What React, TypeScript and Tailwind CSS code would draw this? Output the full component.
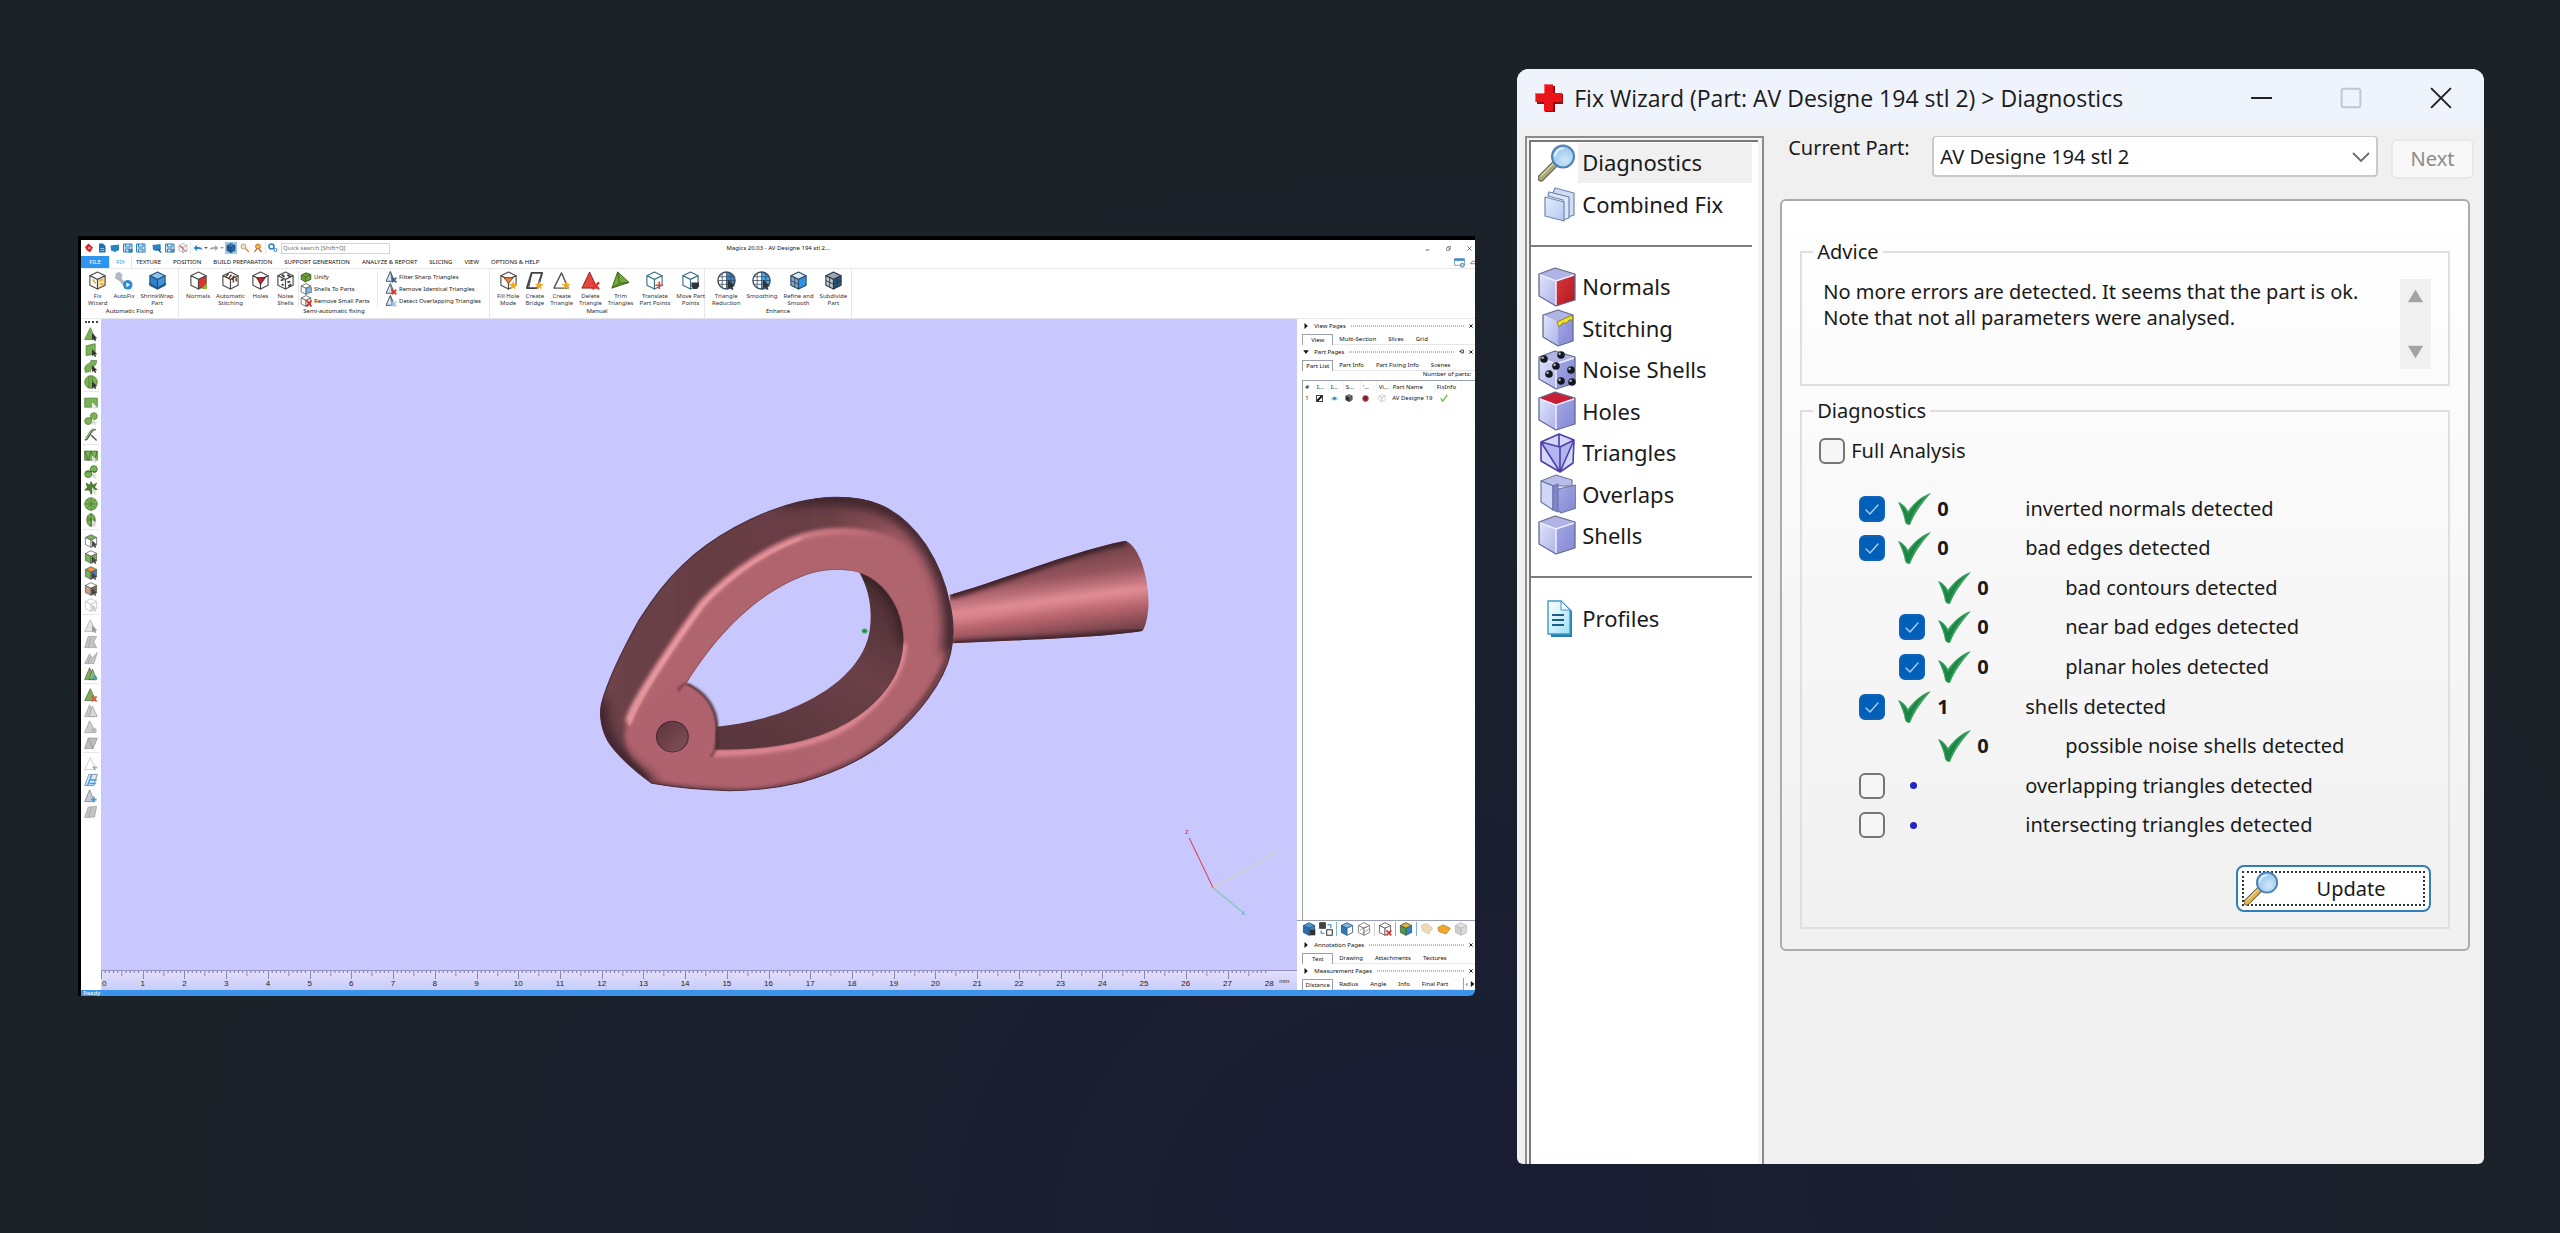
import type { ReactNode } from 'react'

const UI = 'font-["Noto_Sans",sans-serif]'

/* ---------- small drawings ---------- */

type CubeProps = {
  top?: string
  left?: string
  right?: string
  stroke?: string
  size?: string
  children?: ReactNode
}

function Cube({ top = '#fff', left = '#fff', right = '#fff', stroke = '#4b4b4b', size = 'size-[19px]', children }: CubeProps) {
  return (
    <svg viewBox="0 0 20 20" className={size} aria-hidden="true">
      <g stroke={stroke} strokeWidth="1.2" strokeLinejoin="round">
        <path d="M10 1 18 5 10 9 2 5Z" fill={top} />
        <path d="M2 5 10 9V19L2 15Z" fill={left} />
        <path d="M18 5 10 9V19L18 15Z" fill={right} />
      </g>
      {children}
    </svg>
  )
}

function Glyph({ size = 'size-[19px]', children }: { size?: string; children: ReactNode }) {
  return (
    <svg viewBox="0 0 20 20" className={size} fill="none" strokeLinejoin="round" aria-hidden="true">
      {children}
    </svg>
  )
}

const Spark = () => <path d="M15 10 16.2 13.4 19.6 14 16.8 16 17.4 19.6 15 17.6 12.2 19.4 13 16 10.4 14 13.8 13.4Z" fill="#f0a81e" />
const Cursor = ({ fill = '#333' }: { fill?: string }) => <path d="M11.5 9V19L14 16.8 15.6 20 17.4 19.2 16 16.2 19 16Z" fill={fill} />
const Cross = () => <path d="M12 12 19 19M19 12 12 19" stroke="#e2372f" strokeWidth="2.6" />

function SideCube({ top = '#b1b3e4', left = 'url(#cubeLeft)', right = 'url(#cubeRight)', children }: CubeProps) {
  return (
    <svg viewBox="0 0 38 40" className="h-10 w-[38px]" aria-hidden="true">
      <path d="M1 7 17 1 37 7 18 14Z" fill={top} />
      <path d="M1 7 18 14V39L1 29Z" fill={left} />
      <path d="M37 7 18 14V39L37 33Z" fill={right} />
      <path d="M2 8 18 14 36 8M18 14V38" fill="none" stroke="#eceeff" strokeWidth="1.5" />
      <path d="M1 7 17 1 37 7V33L18 39 1 29Z" fill="none" stroke="#626c90" strokeWidth="1.3" strokeLinejoin="round" />
      {children}
    </svg>
  )
}

function Magnifier({ handle, className }: { handle: string; className: string }) {
  return (
    <svg viewBox="0 0 38 38" className={className} aria-hidden="true">
      <path d="M17 20 3 34" stroke="#5d5a45" strokeWidth="7" strokeLinecap="round" />
      <path d="M17 20 3 34" stroke={handle} strokeWidth="5" strokeLinecap="round" />
      <path d="M15 20 3 32" stroke="#f5ebb8" strokeWidth="1.2" strokeLinecap="round" opacity=".7" />
      <circle cx="25" cy="12.5" r="11" fill="url(#lens)" stroke="#4d7fb5" strokeWidth="2" />
      <path d="M17 12a8 8 0 0 1 8-7.5" fill="none" stroke="#fff" strokeWidth="1.6" strokeLinecap="round" opacity=".8" />
    </svg>
  )
}

function CombinedIcon() {
  return (
    <svg viewBox="0 0 38 40" className="h-10 w-[38px]" aria-hidden="true">
      <g stroke="#6f86ad" strokeWidth="1.2" strokeLinejoin="round">
        <path d="M17 4 36 9V31L30 33V13L15 9Z" fill="#cfdcf4" />
        <path d="M11 8 31 13V34L25 36V16L10 12Z" fill="#dce6f8" />
        <path d="M7 13 26 18V37L7 32Z" fill="url(#sheet)" />
      </g>
    </svg>
  )
}

function ProfilesIcon() {
  return (
    <svg viewBox="0 0 38 40" className="h-10 w-[38px]" aria-hidden="true">
      <path d="M11 4H24L34 13V39H13Z" fill="#2b7fae" />
      <path d="M10 3H23L32 12V36H10Z" fill="url(#page)" stroke="#3c9ac6" strokeWidth="1.4" />
      <path d="M23 3V12H32Z" fill="#fff" stroke="#3c9ac6" strokeWidth="1" />
      <path d="M14 17H26M14 22H26M14 27H26" stroke="#1c5f86" strokeWidth="1.8" />
    </svg>
  )
}

function GreenCheck() {
  return (
    <svg viewBox="0 0 34 32" className="h-8 w-[34px]" aria-hidden="true">
      <path d="M0 9C4 10 8 14 10 18 15 11 23 3 33 0 26 8 17 19 12 32 9 32 8 31 7 29 6 22 3 15 0 9Z" fill="#3c9f60" />
      <path d="M2 11C6 14 8 17 10 21 15 13 21 7 28 3 21 10 15 19 11 31 9 31 8 30 8 28 7 21 5 16 2 11Z" fill="#1b8743" />
    </svg>
  )
}

function SharedDefs() {
  return (
    <svg className="absolute size-0" aria-hidden="true">
      <defs>
        <linearGradient id="cubeLeft" x1="0" y1="0" x2="1" y2="1">
          <stop offset="0" stopColor="#dfe6fa" />
          <stop offset="1" stopColor="#aeb2ea" />
        </linearGradient>
        <linearGradient id="cubeRight" x1="0" y1="0" x2="1" y2="1">
          <stop offset="0" stopColor="#a3a8e6" />
          <stop offset="1" stopColor="#8388d2" />
        </linearGradient>
        <linearGradient id="cubeRed" x1="0" y1="0" x2="1" y2="1">
          <stop offset="0" stopColor="#d63a3f" />
          <stop offset="1" stopColor="#b5161c" />
        </linearGradient>
        <linearGradient id="sheet" x1="0" y1="0" x2="1" y2="1">
          <stop offset="0" stopColor="#e3ecfb" />
          <stop offset="1" stopColor="#b4caf0" />
        </linearGradient>
        <linearGradient id="page" x1="0" y1="0" x2="1" y2="1">
          <stop offset="0" stopColor="#fff" />
          <stop offset="1" stopColor="#9fe0f6" />
        </linearGradient>
        <radialGradient id="lens" cx=".6" cy=".65" r=".7">
          <stop offset="0" stopColor="#cfe6fa" />
          <stop offset="1" stopColor="#8fc1ea" />
        </radialGradient>
      </defs>
    </svg>
  )
}

/* ---------- Magics window ---------- */

function QuickBar() {
  const disk = (x: string) => (
    <Glyph size="size-[10px]">
      <path d="M1 2H18V18H1Z" fill="#d8e9f6" stroke="#2d7fbd" strokeWidth="2" />
      <path d="M5 2V8H14V2M5 18V12H14V18" stroke="#2d7fbd" strokeWidth="2" />
      <path d="M11 12H19V19H11Z" fill={x} />
    </Glyph>
  )
  return (
    <div className="grid h-4 grid-cols-3 items-center bg-white">
      <div className="flex items-center gap-[3px] pl-[3px]">
        <Glyph size="size-[10px]"><path d="M9 1 18 9 12 19 5 14 2 8Z" fill="#d8262c" /><path d="M8 10H13" stroke="#fff" strokeWidth="2" /></Glyph>
        <Glyph size="size-[10px]"><path d="M4 1H12L17 6V19H4Z" fill="#1f6fb2" /><path d="M7 11H14M7 15H14" stroke="#bcd9f0" strokeWidth="1.5" /></Glyph>
        <Glyph size="size-[10px]"><path d="M1 5 8 4 18 3V14L10 18 2 15Z" fill="#2c84c4" /></Glyph>
        {disk('#2d7fbd')}
        {disk('#7fa9c8')}
        <span className="-mr-px w-px" />
        <Glyph size="size-[10px]"><path d="M1 4 17 2 18 13 9 16 2 14Z" fill="#2c84c4" /><path d="M12 12 18 19" stroke="#1c5c8c" strokeWidth="3" /></Glyph>
        {disk('#5d8fb5')}
        <Cube size="size-[10px]" stroke="#8a8a8a"><path d="M3 6 17 17" stroke="#e04038" strokeWidth="2" /></Cube>
        <span className="-mx-px h-3 w-px bg-gray-200" />
        <Glyph size="size-[10px]"><path d="M1 10 8 4V8C14 7 18 9 19 14 16 12 13 12 8 12V16Z" fill="#2a86cc" /></Glyph>
        <Glyph size="-mx-0.5 size-[4px]"><path d="M1 5H19L10 15Z" fill="#555" /></Glyph>
        <Glyph size="size-[10px]"><path d="M19 10 12 4V8C6 7 2 9 1 14 4 12 7 12 12 12V16Z" fill="#a9a9a9" /></Glyph>
        <Glyph size="-mx-0.5 size-[4px]"><path d="M1 5H19L10 15Z" fill="#999" /></Glyph>
        <span className="flex h-3 w-3 items-center justify-center bg-[#9cc7ec]">
          <Cube size="size-[10px]" top="#3a7fb8" left="#1f5c92" right="#2a6ca6" stroke="#173f66" />
        </span>
        <Glyph size="size-[10px]"><circle cx="7" cy="7" r="5" fill="#f8dfae" stroke="#888" strokeWidth="1.5" /><path d="M11 11 18 18" stroke="#e0932b" strokeWidth="3" /></Glyph>
        <Glyph size="size-[10px]"><circle cx="10" cy="7" r="5" fill="#f6b24d" stroke="#b5641c" strokeWidth="1.5" /><path d="M3 18 8 11M12 12 17 18" stroke="#d45a2a" strokeWidth="2.5" /></Glyph>
        <span className="-mx-px h-3 w-px bg-gray-200" />
        <Glyph size="size-[10px]"><circle cx="7" cy="7" r="5" stroke="#2a7fc0" strokeWidth="3" /><circle cx="15" cy="14" r="3" stroke="#2a7fc0" strokeWidth="2" /></Glyph>
        <input
          aria-label="Quick search"
          placeholder="Quick search [Shift+Q]"
          className="h-[11px] w-[109px] border border-gray-300 bg-white px-px text-[6px] text-gray-700 placeholder:text-gray-500"
        />
      </div>
      <h2 className="text-center text-[6px] leading-3 text-[#111]">Magics 20.03 - AV Designe 194 stl 2...</h2>
      <div className="flex items-center justify-end gap-4 pr-[3px]">
        <button aria-label="Minimize"><Glyph size="size-[5px]"><path d="M3 16H17" stroke="#333" strokeWidth="3" /></Glyph></button>
        <button aria-label="Restore"><Glyph size="size-[5px]"><path d="M2 7H13V18H2ZM7 7V2H18V13H13" stroke="#333" strokeWidth="2" /></Glyph></button>
        <button aria-label="Close"><Glyph size="size-[5px]"><path d="M2 2 18 18M18 2 2 18" stroke="#333" strokeWidth="2.5" /></Glyph></button>
      </div>
    </div>
  )
}

function RibbonTabs() {
  const tabs = ['TEXTURE', 'POSITION', 'BUILD PREPARATION', 'SUPPORT GENERATION', 'ANALYZE & REPORT', 'SLICING', 'VIEW', 'OPTIONS & HELP']
  return (
    <div className="flex h-[13px] items-stretch border-b border-gray-200 bg-white text-[6px] leading-3 text-[#111]">
      <button className="w-7 bg-[#2f94ee] text-white">FILE</button>
      <button className="w-[23px] border-x border-gray-200 text-[#3d9be9]">FIX</button>
      <div className="flex flex-1 gap-3 pl-1">
        {tabs.map((t) => <button key={t} className="whitespace-nowrap">{t}</button>)}
      </div>
      <div className="flex items-center gap-1">
        <Glyph size="h-[11px] w-[13px]"><path d="M1 3H19V15H1Z" fill="#fff" stroke="#5b97c4" strokeWidth="1.5" /><path d="M1 3H19V7H1Z" fill="#3c8cc8" /><circle cx="15" cy="15" r="3.5" fill="#c9d3de" stroke="#56708a" strokeWidth="1.5" /></Glyph>
        <Glyph size="size-[5px]"><path d="M2 15 9 5H20M2 15H20" stroke="#444" strokeWidth="2.5" /></Glyph>
      </div>
    </div>
  )
}

function RibbonItem({ icon, lines }: { icon: ReactNode; lines: string[] }) {
  return (
    <button className="flex flex-col items-center px-[3px]">
      {icon}
      <span className="mt-[3px] text-center text-[6px] leading-[7px] whitespace-pre text-[#333]">{lines.join('\n')}</span>
    </button>
  )
}

function RibbonRow({ icon, label }: { icon: ReactNode; label: string }) {
  return (
    <button className="flex h-3 items-center gap-0.5 text-[6px] whitespace-nowrap text-[#222]">
      {icon}
      {label}
    </button>
  )
}

function RibbonGroup({ title, className = '', children }: { title: string; className?: string; children: ReactNode }) {
  return (
    <section className={`flex flex-col justify-between border-r border-gray-200 ${className}`}>
      <div className="flex items-start pt-0.5 pl-1">{children}</div>
      <h3 className="pb-0.5 text-center text-[6px] leading-[9px] text-[#222]">{title}</h3>
    </section>
  )
}

function SmallTri({ fill, mark }: { fill: string; mark: string }) {
  return (
    <Glyph size="size-3">
      <path d="M9 1 16 17H2Z" fill={fill} stroke="#43566a" strokeWidth="1.5" />
      <path d="M2 17 9 1 12 17Z" fill="#dfe6ee" stroke="#43566a" strokeWidth="1.2" />
      <path d="M11 11 19 19M19 11 11 19" stroke={mark} strokeWidth="2.5" />
    </Glyph>
  )
}

function MeshDisc({ right }: { right: string }) {
  return (
    <Glyph>
      <circle cx="10" cy="10" r="9" fill="#fff" />
      <path d="M10 1A9 9 0 0 1 10 19Z" fill={right} />
      <circle cx="10" cy="10" r="9" stroke="#3a4b5c" strokeWidth="1.5" />
      <path d="M10 1V19M1 10H19M5.5 3V17M2.5 6H17M2.5 14H17M14.5 3V17" stroke="#3a4b5c" strokeWidth=".8" />
      <Cursor />
    </Glyph>
  )
}

function Ribbon() {
  return (
    <div className="flex h-[49px] items-stretch bg-white">
      <RibbonGroup title="Automatic Fixing" className="w-[98px]">
        <RibbonItem lines={['Fix', 'Wizard']} icon={<Cube right="#f6e1a8"><path d="M12 10 16 9M13 13 17 15M5 9 8 13" stroke="#e0a42c" strokeWidth="1.5" /></Cube>} />
        <RibbonItem
          lines={['AutoFix']}
          icon={
            <Glyph>
              <path d="M2 2 6 1 9 4 8 8 15 15 12 18 5 10 1 8Z" fill="#b4b9bf" />
              <circle cx="14.5" cy="14.5" r="5" fill="#2a8ad2" />
              <path d="M13 12V17L17 14.5Z" fill="#fff" />
            </Glyph>
          }
        />
        <RibbonItem lines={['ShrinkWrap', 'Part']} icon={<Cube top="#8cc4ee" left="#2d82cc" right="#3f93da" stroke="#24557e"><path d="M1 13 10 18 19 13" fill="none" stroke="#24557e" strokeWidth="1.5" /></Cube>} />
      </RibbonGroup>
      <RibbonGroup title="Semi-automatic fixing" className="w-[311px]">
        <RibbonItem lines={['Normals']} icon={<Cube right="#e3322b"><path d="M13 19 19 12V19Z" fill="#8bb83a" /></Cube>} />
        <RibbonItem lines={['Automatic', 'Stitching']} icon={<Cube><path d="M5 6 8 3M8 8 11 4M11 9 14 5M13 12V8M16 11V7" stroke="#5a3a20" strokeWidth="1.5" /></Cube>} />
        <RibbonItem lines={['Holes']} icon={<Cube><path d="M6 7H15L10 14Z" fill="#c3262b" stroke="#5a1a1c" /></Cube>} />
        <RibbonItem lines={['Noise', 'Shells']} icon={<Cube><path d="M6 4 9 6M5 10 8 9M12 12 15 11M6 14 8 15M13 16 16 14M12 4 15 6" stroke="#333" strokeWidth="1.8" /></Cube>} />
        <span className="h-9 w-px bg-gray-200" />
        <div className="flex w-[78px] flex-col pl-px">
          <RibbonRow label="Unify" icon={<Glyph size="size-3"><path d="M2 7 10 3 18 6V14L9 18 2 14Z" fill="#6fa03a" stroke="#36591b" strokeWidth="1.5" /><path d="M2 7 9 10 18 6M9 10V18" stroke="#36591b" /></Glyph>} />
          <RibbonRow label="Shells To Parts" icon={<Cube size="size-3"><path d="M11 8H19V16H11Z" fill="#8dbbe6" stroke="#35658f" /></Cube>} />
          <RibbonRow label="Remove Small Parts" icon={<Cube size="size-3"><path d="M11 9 19 19M19 9 11 19" stroke="#d9322e" strokeWidth="3" /></Cube>} />
        </div>
        <span className="h-9 w-px bg-gray-200" />
        <div className="flex flex-col pl-[7px]">
          <RibbonRow label="Filter Sharp Triangles" icon={<SmallTri fill="#5d84ab" mark="#3a5f86" />} />
          <RibbonRow label="Remove Identical Triangles" icon={<SmallTri fill="#e3a1a0" mark="#d9322e" />} />
          <RibbonRow label="Detect Overlapping Triangles" icon={<SmallTri fill="#4fa3e0" mark="#9fd0f2" />} />
        </div>
      </RibbonGroup>
      <RibbonGroup title="Manual" className="w-[215px]">
        <RibbonItem lines={['Fill Hole', 'Mode']} icon={<Cube><path d="M5 7H15L10 13Z" fill="#e9813b" stroke="#7a3f16" /><Spark /></Cube>} />
        <RibbonItem lines={['Create', 'Bridge']} icon={<Glyph><path d="M7 2H18L13 18H2Z" stroke="#444" strokeWidth="2" /><path d="M7 2 4 18M18 2 15 14" stroke="#444" /><Spark /></Glyph>} />
        <RibbonItem lines={['Create', 'Triangle']} icon={<Glyph><path d="M10 2 17 18H2Z" fill="#fff" stroke="#555" strokeWidth="1.5" /><Spark /></Glyph>} />
        <RibbonItem lines={['Delete', 'Triangle']} icon={<Glyph><path d="M9 1 17 18H1Z" fill="#e2463e" stroke="#8d2420" /><Cross /></Glyph>} />
        <RibbonItem lines={['Trim', 'Triangles']} icon={<Glyph><path d="M7 1 19 12 1 18Z" fill="#74a83a" stroke="#3c6319" /><path d="M7 1 9 13 1 18M9 13 19 12" stroke="#3c6319" /></Glyph>} />
        <RibbonItem lines={['Translate', 'Part Points']} icon={<Cube stroke="#3b6f86"><path d="M15 11V19M11 15H19" stroke="#e2463e" strokeWidth="1.8" /></Cube>} />
        <RibbonItem lines={['Move Part', 'Points']} icon={<Cube stroke="#3b6f86"><path d="M11 12H19V16L17 19H13L11 16Z" fill="#333" /></Cube>} />
      </RibbonGroup>
      <RibbonGroup title="Enhance" className="w-[147px]">
        <RibbonItem lines={['Triangle', 'Reduction']} icon={<MeshDisc right="#2f86cf" />} />
        <RibbonItem lines={['Smoothing']} icon={<MeshDisc right="#49a2e6" />} />
        <RibbonItem lines={['Refine and', 'Smooth']} icon={<Cube top="#dce9f5" left="#8aa9c6" right="#2f94e4" stroke="#2a4a66"><path d="M2 10 10 14M6 7V17" stroke="#2a4a66" /></Cube>} />
        <RibbonItem lines={['Subdivide', 'Part']} icon={<Cube top="#9aa7b3" left="#c4ccd4" right="#27557c" stroke="#2d3a46"><path d="M2 10 10 14 18 10M6 7V17M14 7V17" stroke="#2d3a46" fill="none" /></Cube>} />
      </RibbonGroup>
    </div>
  )
}

const GREEN = '#79b356'
const cubeFaces = [
  [GREEN, '#fff', '#fff'],
  ['#fff', GREEN, GREEN],
  ['#f0913a', GREEN, '#3f7fb5'],
  ['#fff', '#c9a08a', '#8a6a58'],
  ['#fff', '#fff', '#fff'],
]

const tools: ReactNode[][] = [
  [
    <><path d="M9 1 17 18H1Z" fill={GREEN} stroke="#4d7a30" /><Cursor /></>,
    <><path d="M3 4 16 1V16L3 18Z" fill={GREEN} stroke="#4d7a30" /><Cursor /></>,
    <><path d="M1 14C2 5 9 9 10 2H18C18 12 10 10 9 18L2 19Z" fill={GREEN} stroke="#4d7a30" /><Cursor /></>,
    <><circle cx="10" cy="10" r="9" fill={GREEN} stroke="#4d7a30" /><path d="M7 1V19M12 1V19" stroke="#4d7a30" /><Cursor /></>,
  ],
  [
    <><path d="M1 3H19V16H1Z" fill={GREEN} stroke="#4d7a30" /><Cursor fill="#eee" /></>,
    <><circle cx="14" cy="6" r="5" fill={GREEN} stroke="#4d7a30" /><circle cx="6" cy="13" r="5" fill={GREEN} stroke="#4d7a30" /><Cursor fill="#ddd" /></>,
    <><path d="M1 17C9 17 6 4 17 2M10 10 18 18" stroke="#555" strokeWidth="2" /><path d="M2 14C7 14 6 3 14 1" stroke={GREEN} strokeWidth="2" /></>,
  ],
  [
    <><path d="M1 3H19V16H1Z" fill={GREEN} stroke="#38601f" /><path d="M1 3 6 16 10 3 15 16 19 3" stroke="#38601f" /><Cursor fill="#ddd" /></>,
    <><circle cx="14" cy="6" r="5" fill={GREEN} stroke="#38601f" /><circle cx="6" cy="13" r="5" fill={GREEN} stroke="#38601f" /><path d="M3 10 17 9" stroke="#38601f" /><Cursor fill="#ddd" /></>,
    <><path d="M3 3 8 6 10 1 13 6 18 3 15 9 19 12 13 13 10 19 8 13 1 13 5 9Z" fill="#4e8433" stroke="#38601f" /><Cursor fill="#ddd" /></>,
    <><circle cx="10" cy="10" r="9" fill={GREEN} stroke="#4d7a30" /><path d="M10 1V19M1 10H19M4 4 16 16M16 4 4 16" stroke="#4d7a30" /></>,
    <><ellipse cx="10" cy="10" rx="6" ry="9" fill={GREEN} stroke="#38601f" /><path d="M10 1V19M4 10H16M5 5 15 15" stroke="#38601f" /><Cursor fill="#ddd" /></>,
  ],
  cubeFaces.map(([a, b, c], i) => (
    <>
      <g stroke={i === 4 ? '#bbb' : '#555'}>
        <path d="M10 1 18 5 10 9 2 5Z" fill={a} />
        <path d="M2 5 10 9V19L2 15Z" fill={b} />
        <path d="M18 5 10 9V19L18 15Z" fill={c} />
      </g>
      <Cursor fill={i === 4 ? '#ccc' : '#444'} />
    </>
  )),
  [
    <><path d="M9 1 17 18H1Z" fill="#e4e4e4" stroke="#aaa" /><Cursor fill="#999" /></>,
    <><path d="M6 2H18L14 10 18 18H1Z" fill="#c4c4c4" stroke="#999" /><path d="M10 4 6 18" stroke="#999" /></>,
    <><path d="M8 4 12 10 19 2 14 18H1Z" fill="#c4c4c4" stroke="#999" /><path d="M9 8 6 18" stroke="#999" /></>,
    <><path d="M8 1 15 18H1Z" fill={GREEN} stroke="#555" /><path d="M12 3 18 18H7Z" fill="#8dbb6b" stroke="#555" /><path d="M12 15H19M16 12V19" stroke="#3d9be0" strokeWidth="2.5" /></>,
  ],
  [
    <><path d="M9 1 17 18H1Z" fill={GREEN} stroke="#555" /><path d="M11 12 18 19M18 12 11 19" stroke="#e2593a" strokeWidth="2.5" /></>,
    <><path d="M8 1 15 18H1Z" fill="#c9c9c9" stroke="#999" /><path d="M12 3 19 18H7Z" fill="#d6d6d6" stroke="#999" /></>,
    <><path d="M8 1 17 18H1Z" fill="#cfcfcf" stroke="#999" /><circle cx="14" cy="15" r="4" fill="#bbb" /></>,
    <><path d="M6 3H19L13 18H1Z" fill="#bdbdbd" stroke="#8f8f8f" /><path d="M6 3 13 18" stroke="#8f8f8f" /></>,
  ],
  [
    <><path d="M9 1 17 18H1Z" fill="#fff" stroke="#bbb" /><path d="M15 12V19M12 15H19" stroke="#aaa" strokeWidth="2" /></>,
    <><path d="M7 2 1 18H14L19 2Z" fill="#dde8f2" stroke="#55718a" /><path d="M11 3 5 18M9 10H18M8 15H17" stroke="#3d9be0" strokeWidth="2" /></>,
    <><path d="M8 1 15 18H1Z" fill="#c2c9d0" stroke="#777" /><path d="M14 11V19M10 15H18" stroke="#3d9be0" strokeWidth="2.5" /></>,
    <><path d="M6 3 18 2 15 17 1 18Z" fill="#c4c4c4" stroke="#999" /><path d="M10 3 7 18" stroke="#999" /></>,
  ],
]

function SideTools() {
  return (
    <div className="flex w-5 flex-col items-center bg-white pt-0.5">
      <span className="mb-[3px] w-[13px] border-t-2 border-dotted border-[#444]" />
      {tools.map((group, g) => (
        <div key={g} className="flex flex-col border-b border-gray-200 pb-px last:border-0 [&+div]:pt-[3px]">
          {group.map((icon, i) => (
            <button key={i} aria-label={`Tool ${g + 1}.${i + 1}`} className="flex h-4 w-4 items-center justify-center">
              <Glyph size="size-[14px]">{icon}</Glyph>
            </button>
          ))}
        </div>
      ))}
    </div>
  )
}

const OUTER =
  'M105 700C120 635 160 535 200 450 240 375 270 330 310 285 380 205 490 130 600 97 640 86 670 82 700 82 750 82 780 90 810 105 850 125 890 165 925 225 955 280 975 340 985 400 995 450 997 500 987 550 970 640 900 740 840 800 770 870 690 910 610 937 540 957 470 962 430 962 360 960 290 952 232 940 185 900 140 850 122 815 105 780 98 735 105 700Z'
const INNER = 'M320 640C350 580 400 500 460 435 520 370 580 330 640 308 680 297 720 296 755 308 800 325 835 370 852 420 875 490 872 550 850 610 825 670 780 730 700 775 610 825 500 842 395 838L397 770C395 710 360 660 320 640Z'
const OPENING = 'M320 640C350 580 400 500 460 435 520 370 580 330 640 308 680 297 720 296 757 308 782 360 790 420 783 480 775 550 730 620 660 670 580 730 480 762 397 770 395 710 360 660 320 640Z'
const CONE = 'M985 375C1120 330 1290 245 1430 212 1465 230 1488 320 1488 400 1487 440 1480 475 1472 483 1350 505 1150 510 993 520Z'

function Viewport() {
  return (
    <svg viewBox="0 0 1196 651" preserveAspectRatio="none" className="block h-[651px] w-full bg-[#c8c8fe]" role="img" aria-label="Part preview">
      <defs>
        <linearGradient id="cone" gradientUnits="userSpaceOnUse" x1="1200" y1="245" x2="1243" y2="520">
          <stop offset="0" stopColor="#6a3f45" />
          <stop offset=".3" stopColor="#96545d" />
          <stop offset=".54" stopColor="#dc8890" />
          <stop offset=".72" stopColor="#b8656e" />
          <stop offset="1" stopColor="#653a41" />
        </linearGradient>
        <linearGradient id="band" gradientUnits="userSpaceOnUse" x1="100" y1="0" x2="960" y2="0">
          <stop offset="0" stopColor="#6e4349" />
          <stop offset=".3" stopColor="#663d43" />
          <stop offset=".68" stopColor="#6a3f45" />
          <stop offset=".82" stopColor="#7d4850" stopOpacity=".8" />
          <stop offset="1" stopColor="#a05a64" stopOpacity="0" />
        </linearGradient>
        <linearGradient id="wall" gradientUnits="userSpaceOnUse" x1="800" y1="350" x2="500" y2="800">
          <stop offset="0" stopColor="#4f3036" />
          <stop offset=".45" stopColor="#6b4047" />
          <stop offset="1" stopColor="#5a373d" />
        </linearGradient>
        <linearGradient id="shine" gradientUnits="userSpaceOnUse" x1="170" y1="0" x2="850" y2="0">
          <stop offset="0" stopColor="#f0a0a6" />
          <stop offset=".55" stopColor="#e88f98" />
          <stop offset=".85" stopColor="#c5737c" />
          <stop offset="1" stopColor="#b0646e" stopOpacity="0" />
        </linearGradient>
        <linearGradient id="pin" x1="0" y1="0" x2="1" y2="1">
          <stop offset="0" stopColor="#5a353b" />
          <stop offset="1" stopColor="#84505a" />
        </linearGradient>
        <filter id="soft6"><feGaussianBlur stdDeviation="6" /></filter>
        <filter id="soft14" x="-20%" y="-20%" width="140%" height="140%"><feGaussianBlur stdDeviation="14" /></filter>
        <filter id="soft3"><feGaussianBlur stdDeviation="3" /></filter>
        <clipPath id="outerClip"><path d={OUTER} /></clipPath>
        <clipPath id="innerClip"><path d={INNER} /></clipPath>
        <clipPath id="coneClip"><path d={CONE} /></clipPath>
      </defs>

      <g transform="translate(459 151) scale(.3954 .3333)" fill="none">
        <path d={CONE} fill="url(#cone)" />
        <g clipPath="url(#coneClip)">
          <path d="M985 375C1120 330 1290 245 1430 212" stroke="#3c242b" strokeWidth="26" filter="url(#soft6)" />
          <path d="M1472 483C1350 505 1150 510 993 520" stroke="#3c242b" strokeWidth="18" filter="url(#soft6)" />
          <path d="M990 447C1150 420 1300 375 1480 362" stroke="#e8959c" strokeWidth="18" opacity=".6" filter="url(#soft14)" />
        </g>

        <path d={OUTER} fill="#b0646e" />
        <g clipPath="url(#outerClip)">
          <path
            d="M60 720 180 440 300 240 600 60 800 60 1000 250 1000 420C970 320 900 215 800 185 730 168 650 175 590 205 500 245 420 320 360 390 300 470 240 590 170 755L232 960 90 960Z"
            fill="url(#band)"
            filter="url(#soft6)"
          />
          <path d="M172 750C155 800 160 850 200 890 215 910 235 925 260 950L500 980 700 930 600 800 300 600Z" fill="#b0646e" filter="url(#soft6)" />
          <path d="M172 755C185 690 290 520 360 400 440 300 540 225 620 198 690 176 770 180 850 215" stroke="url(#shine)" strokeWidth="15" filter="url(#soft6)" />
          <path d="M174 765C200 680 300 500 365 400 440 305 530 240 610 205" stroke="#f0a0a6" strokeWidth="5" filter="url(#soft3)" />
          <path d="M560 95C830 50 900 165 945 260 985 350 1000 450 985 550" stroke="#3f262d" strokeWidth="44" filter="url(#soft14)" />
          <path d="M985 540C960 660 850 800 760 865 640 940 520 970 420 962 340 960 280 950 232 940" stroke="#5a343c" strokeWidth="12" filter="url(#soft6)" />
          <path d="M105 690C90 790 140 860 232 940" stroke="#3a232a" strokeWidth="34" filter="url(#soft14)" />
        </g>
        <path d={OUTER} stroke="#4a2e3a" strokeWidth="3" />

        <path d={INNER} stroke="#8a4a54" strokeWidth="4" />
        <path d="M869 520C865 620 800 720 700 785 610 835 500 850 385 850" stroke="#e38c95" strokeWidth="16" filter="url(#soft6)" />
        <path d="M320 640C300 648 300 660 300 664M397 780C398 820 394 845 380 860" stroke="#6b3d45" strokeWidth="6" filter="url(#soft3)" />
        <path d={INNER} fill="url(#wall)" />
        <g clipPath="url(#innerClip)">
          <path d="M755 308C835 345 875 430 869 520" stroke="#2f1c22" strokeWidth="24" filter="url(#soft14)" />
        </g>
        <path d={OPENING} fill="#c8c8fe" />
        <path d="M322 642C365 665 397 710 397 772V838" stroke="#4a2b32" strokeWidth="6" filter="url(#soft3)" />
        <ellipse cx="284" cy="800" rx="40" ry="46" fill="url(#pin)" stroke="#4a2b32" strokeWidth="3" />
        <circle cx="770" cy="483" r="7" fill="#1f8f4d" stroke="#7bc79c" strokeWidth="2" />
      </g>

      {/* axis triad */}
      <g fill="none" strokeWidth="1">
        <path d="M1112 569 1088 519" stroke="#d9434a" />
        <path d="M1112 569 1177 532" stroke="#d8d6a8" />
        <path d="M1112 569 1140 592" stroke="#7fc8b0" />
      </g>
      <text x="1084" y="515" fontSize="7" fill="#c2323a" className={UI}>z</text>
      <text x="1140" y="596" fontSize="7" fill="#4fae94" className={UI}>x</text>
    </svg>
  )
}

function Ruler() {
  const units = Array.from({ length: 28 }, (_, i) => i)
  return (
    <div className="flex h-5 border-t border-[#8f8fc0] bg-linear-to-b from-[#e4defa] to-[#c6cdfb] font-['Liberation_Sans',sans-serif] text-[8px] leading-[9px] text-[#222]">
      <div className="grid flex-1 grid-cols-28">
        {units.map((n) => (
          <div key={n} className="flex flex-col justify-between pb-0.5">
            <svg viewBox="0 0 100 8" preserveAspectRatio="none" className="h-2 w-full" aria-hidden="true">
              <path d="M1 0V8" stroke="#77779d" strokeWidth="2" />
              <path d="M50 0V5" stroke="#77779d" strokeWidth="2" />
              <path d="M10 0V2M20 0V2M30 0V2M40 0V2M60 0V2M70 0V2M80 0V2M90 0V2" stroke="#8a8ab0" strokeWidth="3" />
            </svg>
            <span className={n ? 'w-4 -translate-x-1/2 text-center' : 'pl-px'}>{n}</span>
          </div>
        ))}
      </div>
      <div className="flex w-7 items-end justify-between pr-2 pb-0.5">
        <span className="w-4 -translate-x-1/2 text-center">28</span>
        <span className="pb-0.5 text-[6px]">mm</span>
      </div>
    </div>
  )
}

function PageHeader({ title, open = false, pin = false }: { title: string; open?: boolean; pin?: boolean }) {
  return (
    <div className="flex h-[13px] items-center gap-[5px] pr-0.5 pl-[6px] text-[#111]">
      <Glyph size="size-[6px]">
        <path d={open ? 'M1 4H19L10 17Z' : 'M5 0 16 10 5 20Z'} fill="#111" />
      </Glyph>
      <span className="whitespace-nowrap">{title}</span>
      <span className="h-0.5 flex-1 bg-[repeating-linear-gradient(90deg,#bbb_0_1px,transparent_1px_2px)]" />
      {pin && <Glyph size="size-[5px]"><path d="M1 10H8M8 4H18V16H8Z" stroke="#222" strokeWidth="3" /></Glyph>}
      <Glyph size="size-[4px]"><path d="M2 2 18 18M18 2 2 18" stroke="#222" strokeWidth="5" /></Glyph>
    </div>
  )
}

function PageTabs({ tabs, children }: { tabs: string[]; children?: ReactNode }) {
  const [first, ...rest] = tabs
  return (
    <div className="flex h-[13px] items-end pl-[5px] text-[#111]">
      <button className="h-[11px] w-[31px] border border-b-0 border-gray-400 bg-white text-center leading-[8px] whitespace-nowrap">{first}</button>
      <div className="flex h-[11px] flex-1 items-start gap-[12px] border-b border-gray-200 pt-px pl-[6px]">
        {rest.map((t) => <button key={t} className="whitespace-nowrap">{t}</button>)}
      </div>
      {children}
    </div>
  )
}

function PartPanel() {
  return (
    <aside className="flex w-[178px] flex-col overflow-hidden bg-white text-[6px] leading-[8px]">
      <PageHeader title="View Pages" />
      <PageTabs tabs={['View', 'Multi-Section', 'Slices', 'Grid']} />
      <PageHeader title="Part Pages" open pin />
      <PageTabs tabs={['Part List', 'Part Info', 'Part Fixing Info', 'Scenes']} />
      <p className="h-[9px] pr-1 text-right leading-[7px] text-[#111]">Number of parts:</p>
      <div className="ml-[5px] flex-1 border-t border-l border-gray-400">
        <table className="w-[158px] table-fixed text-left text-[#111]">
          <colgroup>
            <col className="w-[11px]" />
            <col className="w-[14px]" />
            <col className="w-[15px]" />
            <col className="w-[17px]" />
            <col className="w-[16px]" />
            <col className="w-[14px]" />
            <col className="w-[44px]" />
            <col className="w-[27px]" />
          </colgroup>
          <thead>
            <tr className="h-3">
              {['#', 'I...', 'I...', 'S...', "'...", 'Vi...', 'Part Name', 'FixInfo'].map((h, i) => (
                <th key={i} className="border-r border-gray-100 p-0 pl-0.5 font-normal whitespace-nowrap">{h}</th>
              ))}
            </tr>
          </thead>
          <tbody>
            <tr className="h-[10px] [&>td]:p-0 [&>td]:pl-0.5">
              <td>1</td>
              <td>
                <input
                  type="checkbox"
                  defaultChecked
                  aria-label="Select part"
                  className="block size-[7px] appearance-none border border-gray-700 bg-white checked:bg-[linear-gradient(135deg,transparent_35%,#222_35%_65%,transparent_65%)]"
                />
              </td>
              <td><Glyph size="h-[7px] w-[9px]"><ellipse cx="10" cy="10" rx="10" ry="6" fill="#a9d8f4" /><circle cx="10" cy="10" r="4" fill="#2a7fc0" /></Glyph></td>
              <td><Cube size="size-[8px]" top="#888" left="#333" right="#666" stroke="#222" /></td>
              <td><Glyph size="size-[7px]"><circle cx="10" cy="10" r="9" fill="#a3323a" /><circle cx="10" cy="10" r="4" fill="#5e1c22" /></Glyph></td>
              <td><Cube size="size-[8px]" stroke="#aaa" /></td>
              <td className="whitespace-nowrap">AV Designe 19</td>
              <td><Glyph size="ml-1 size-[8px]"><path d="M2 11 7 18 18 2" stroke="#5cb531" strokeWidth="3" /></Glyph></td>
            </tr>
          </tbody>
        </table>
      </div>
      <div className="flex h-[18px] items-center gap-[3px] border-t border-gray-400 pb-0.5 pl-[5px]">
        <Cube size="size-[14px]" top="#4b95d6" left="#2a6fae" right="#3a82c4" stroke="#2a5a86"><path d="M11 11H19V19H11Z" fill="#333" /></Cube>
        <Glyph size="size-[14px]"><path d="M1 1H9V9H1ZM11 11H19V19H11Z" fill="#fff" stroke="#333" strokeWidth="1.5" /><path d="M1 1H9V9H1Z" fill="#444" /><path d="M12 4H17V9M8 16H3V12" stroke="#3a82c4" strokeWidth="1.5" /></Glyph>
        <span className="h-3.5 w-px bg-[#7fb4dc]" />
        <Cube size="size-[14px]" top="#7fb5e3" left="#2f7abd" right="#fff" stroke="#2a5a86" />
        <Cube size="size-[14px]" stroke="#777"><path d="M4 12 14 6M8 16 17 10" stroke="#777" /></Cube>
        <span className="h-3.5 w-px bg-gray-300" />
        <Cube size="size-[14px]" stroke="#555"><Cross /></Cube>
        <span className="h-3.5 w-px bg-[#7fb4dc]" />
        <Cube size="size-[14px]" top="#e8b13c" left="#4e9a4a" right="#3a82c4" stroke="#45603a" />
        <span className="h-3.5 w-px bg-[#7fb4dc]" />
        <Glyph size="size-[14px]"><path d="M2 5 9 2 18 9 12 17 4 13Z" fill="#ecdcb8" stroke="#cdbb8e" /></Glyph>
        <Glyph size="size-[14px]"><path d="M1 8 9 4 19 9 13 17 3 14Z" fill="#f0a92e" stroke="#b8781a" /></Glyph>
        <Cube size="size-[14px]" top="#e2e2e2" left="#cfcfcf" right="#d8d8d8" stroke="#bdbdbd" />
      </div>
      <PageHeader title="Annotation Pages" />
      <PageTabs tabs={['Text', 'Drawing', 'Attachments', 'Textures']} />
      <PageHeader title="Measurement Pages" />
      <PageTabs tabs={['Distance', 'Radius', 'Angle', 'Info', 'Final Part']}>
        <button aria-label="Scroll tabs" className="flex h-3 w-3 items-center justify-between border-l border-gray-400">
          <Glyph size="size-[5px]"><path d="M14 2 5 10 14 18Z" fill="#999" /></Glyph>
          <Glyph size="size-[6px]"><path d="M6 0 18 10 6 20Z" fill="#111" /></Glyph>
        </button>
      </PageTabs>
    </aside>
  )
}

function MagicsWindow() {
  return (
    <section className="mt-[236px] min-w-0 flex-[1396] overflow-hidden rounded-br-md border-t-4 border-l-[3px] border-black">
      <QuickBar />
      <RibbonTabs />
      <Ribbon />
      <div className="flex border-t border-gray-200">
        <SideTools />
        <div className="min-w-0 flex-1">
          <Viewport />
          <Ruler />
        </div>
        <PartPanel />
      </div>
      <footer className="h-[6px] overflow-hidden bg-[#3b93ea] pl-0.5 text-[6px] leading-[7px] text-white">Ready</footer>
    </section>
  )
}

/* ---------- Fix Wizard dialog ---------- */

const dots = [[6, 9], [23, 5], [18, 16], [11, 24], [33, 20], [23, 31], [34, 32]]

const pages: ({ label: string; icon: ReactNode } | null)[] = [
  { label: 'Diagnostics', icon: <Magnifier handle="#a9a77a" className="size-[38px]" /> },
  { label: 'Combined Fix', icon: <CombinedIcon /> },
  null,
  { label: 'Normals', icon: <SideCube right="url(#cubeRed)" /> },
  {
    label: 'Stitching',
    icon: (
      <svg viewBox="0 0 38 40" className="h-10 w-[38px]" aria-hidden="true">
        <path d="M5 7 20 2 35 7 20 14Z" fill="#b1b3e4" />
        <path d="M5 7 20 14V38L5 29Z" fill="url(#cubeLeft)" />
        <path d="M35 7 20 14V38L35 33Z" fill="url(#cubeRight)" />
        <path d="M5 7 20 2 35 7V33L20 38 5 29Z" fill="none" stroke="#626c90" strokeWidth="1.3" strokeLinejoin="round" />
        <path d="M19 14 34 7 35 12 31 12 29 15 25 15 21 19Z" fill="#f0e02c" stroke="#8d8420" strokeWidth="1" />
      </svg>
    ),
  },
  {
    label: 'Noise Shells',
    icon: (
      <SideCube>
        {dots.map(([x, y]) => (
          <g key={x + y}>
            <circle cx={x} cy={y} r="3.8" fill="#16181f" />
            <circle cx={x - 1.4} cy={y - 1.2} r="1.2" fill="#b8bccb" />
          </g>
        ))}
      </SideCube>
    ),
  },
  { label: 'Holes', icon: <SideCube top="#c81f34" /> },
  {
    label: 'Triangles',
    icon: (
      <svg viewBox="0 0 38 40" className="h-10 w-[38px]" aria-hidden="true">
        <path d="M3 9 21 1 36 7 35 30 22 39 3 28Z" fill="#d5d7fa" />
        <path d="M3 9 22 14 22 39ZM36 7 22 14V39Z" fill="#b3b5f0" />
        <path d="M3 9 21 1 36 7 35 30 22 39 3 28ZM3 9 22 14 36 7M22 14V39M3 9 22 39 36 7M21 1V14" fill="none" stroke="#4c3fa5" strokeWidth="1.6" strokeLinejoin="round" />
      </svg>
    ),
  },
  {
    label: 'Overlaps',
    icon: (
      <svg viewBox="0 0 38 40" className="h-10 w-[38px]" aria-hidden="true">
        <g stroke="#6b7aa6" strokeWidth="1.2" strokeLinejoin="round">
          <path d="M3 7 18 1 34 6V12L16 12Z" fill="#b9bdea" />
          <path d="M3 7 15 12V36L3 28Z" fill="#cfd6f6" />
          <path d="M15 12 20 10V38L15 36Z" fill="#7f86cd" />
          <path d="M20 15 38 11V34L23 39 20 36Z" fill="url(#cubeRight)" />
        </g>
      </svg>
    ),
  },
  { label: 'Shells', icon: <SideCube /> },
  null,
  { label: 'Profiles', icon: <ProfilesIcon /> },
]

function Pages() {
  return (
    <nav className="w-[239px] border-2 border-b-0 border-[#8a8a90] bg-[#f4f4f4] pt-0.5 pr-1 pl-0.5">
      <div className="h-full border-t-2 border-l-2 border-[#77777d] bg-white pr-[6px] text-[22px] text-[#1a1a1a]">
        <div className="grid h-[497px] grid-rows-12">
          {pages.map((p, i) =>
            p ? (
              <button key={i} className="flex items-center pl-[7px] text-left whitespace-nowrap">
                <span className="flex w-10 justify-start">{p.icon}</span>
                <span className={`flex h-10 flex-1 items-center pl-1 ${i === 0 ? 'bg-[#f0f0f0]' : ''}`}>{p.label}</span>
              </button>
            ) : (
              <hr key={i} className="self-center border-t-2 border-[#7d7d82]" />
            ),
          )}
        </div>
      </div>
    </nav>
  )
}

function CheckBox({ checked = false }: { checked?: boolean }) {
  return (
    <span className="relative flex size-[26px]">
      <input
        type="checkbox"
        defaultChecked={checked}
        className="peer size-[26px] appearance-none rounded-md border-2 border-[#757575] bg-[#f6f6f6] checked:border-[#0f62b8] checked:bg-[#005fb8]"
      />
      <svg viewBox="0 0 26 26" className="pointer-events-none absolute inset-0 hidden size-[26px] peer-checked:block" fill="none" aria-hidden="true">
        <path d="M7 14 11 18 19 9" stroke="#a9cff2" strokeWidth="1.4" strokeLinecap="round" strokeLinejoin="round" />
      </svg>
    </span>
  )
}

type Check = { text: string; count?: number; box?: 'on' | 'off'; indent?: boolean }

const checks: Check[] = [
  { text: 'inverted normals detected', count: 0, box: 'on' },
  { text: 'bad edges detected', count: 0, box: 'on' },
  { text: 'bad contours detected', count: 0, indent: true },
  { text: 'near bad edges detected', count: 0, box: 'on', indent: true },
  { text: 'planar holes detected', count: 0, box: 'on', indent: true },
  { text: 'shells detected', count: 1, box: 'on' },
  { text: 'possible noise shells detected', count: 0, indent: true },
  { text: 'overlapping triangles detected', box: 'off' },
  { text: 'intersecting triangles detected', box: 'off' },
]

function CheckRow({ text, count, box, indent }: Check) {
  return (
    <label className={`flex items-center whitespace-nowrap ${indent ? 'pl-10' : ''}`}>
      <span className="w-[39px]">{box && <CheckBox checked={box === 'on'} />}</span>
      <span className="flex w-[39px] items-center">
        {count === undefined ? <span className="ml-3 size-[7px] rounded-full bg-[#2424c8]" /> : <GreenCheck />}
      </span>
      <b className="w-[88px]">{count}</b>
      {text}
    </label>
  )
}

function FixWizard() {
  return (
    <section className="mt-[69px] flex min-h-[1095px] min-w-0 flex-[968] flex-col overflow-hidden rounded-t-xl rounded-b-md bg-[#f0f0f0]">
      <header className="flex h-[58px] items-center bg-[#eff3fb] pr-8 pl-[17px]">
        <svg viewBox="0 0 30 30" className="size-[30px]" aria-hidden="true">
          <path d="M11 3H21V11H29V21H21V29H11V21H3V11H11Z" fill="#8d1014" />
          <path d="M10 1H19V10H28V19H19V28H10V19H1V10H10Z" fill="#e8141a" />
          <path d="M10 1H19V2H11V10H10ZM1 10H10V11H2V19H1Z" fill="#f7696c" />
        </svg>
        <h1 className="flex-1 pl-[10px] font-['Open_Sans',sans-serif] text-[23px] whitespace-nowrap text-[#1a1a1a]">
          Fix Wizard (Part: AV Designe 194 stl 2) &gt; Diagnostics
        </h1>
        <div className="flex gap-[68px]">
          <button aria-label="Minimize"><Glyph size="size-[22px]"><path d="M1 10H20" stroke="#222" strokeWidth="2" /></Glyph></button>
          <button aria-label="Maximize" disabled><Glyph size="size-[22px]"><rect x="1.5" y="1.5" width="17" height="17" rx="2" stroke="#c3c6cd" strokeWidth="1.8" /></Glyph></button>
          <button aria-label="Close"><Glyph size="size-[22px]"><path d="M1 1 19 19M19 1 1 19" stroke="#222" strokeWidth="1.8" /></Glyph></button>
        </div>
      </header>

      <div className="flex flex-1 pt-[9px] pl-2">
        <Pages />
        <main className="flex-1 pr-[10px] pl-4 text-[20px] text-[#1a1a1a]">
          <div className="flex items-start pl-2">
            <label htmlFor="part" className="w-[144px] leading-[24px] whitespace-nowrap">Current Part:</label>
            <div className="relative flex-1">
              <select
                id="part"
                className="h-[41px] w-full appearance-none rounded-sm border-2 border-t border-[#c9c9c9] bg-white pt-0.5 pl-[6px]"
              >
                <option>AV Designe 194 stl 2</option>
              </select>
              <svg viewBox="0 0 18 10" className="pointer-events-none absolute top-4 right-2 h-[10px] w-[18px]" fill="none" aria-hidden="true">
                <path d="M1 1 9 9 17 1" stroke="#6a6a6a" strokeWidth="1.8" />
              </svg>
            </div>
            <button disabled className="mt-[3px] ml-[13px] h-10 w-[83px] rounded-md border-2 border-[#e8e8e8] bg-[#f8f8f8] text-[#8b8b8b]">
              Next
            </button>
          </div>

          <div className="mt-5 mr-1 rounded-md border-2 border-[#ababab] bg-linear-to-b from-white to-[#f0f0f0] px-[18px] pt-[38px] pb-5">
            <fieldset className="border-2 border-[#dfdfdf] pr-[17px] pb-[15px] pl-[15px]">
              <legend className="-ml-1 px-1 leading-[26px]">Advice</legend>
              <div className="mt-[14px] flex">
                <p className="flex-1 pl-[6px] leading-[26px] whitespace-nowrap">
                  No more errors are detected. It seems that the part is ok.
                  <br />
                  Note that not all parameters were analysed.
                </p>
                <div className="flex h-[90px] w-[31px] flex-col items-center justify-between bg-[#f0f0f0] py-[10px]">
                  <button aria-label="Scroll up"><Glyph size="h-[14px] w-[17px]"><path d="M10 1 21 19H-1Z" fill="#a3a3a3" /></Glyph></button>
                  <button aria-label="Scroll down"><Glyph size="h-[14px] w-[17px]"><path d="M10 19 21 1H-1Z" fill="#a3a3a3" /></Glyph></button>
                </div>
              </div>
            </fieldset>

            <fieldset className="mt-3 border-2 border-[#dfdfdf] pr-[17px] pb-[15px] pl-[15px]">
              <legend className="-ml-1 px-1 leading-[26px]">Diagnostics</legend>
              <label className="mt-3 ml-0.5 flex items-center gap-[6px]">
                <CheckBox />
                Full Analysis
              </label>
              <div className="mt-[23px] ml-[42px] grid h-[356px] grid-rows-9">
                {checks.map((c) => <CheckRow key={c.text} {...c} />)}
              </div>
              <div className="mt-5 flex justify-end">
                <button className="h-[47px] w-[195px] rounded-lg border-2 border-[#2f7fb8] bg-white p-1">
                  <span className="flex h-full items-center border-2 border-dotted border-[#333]">
                    <Magnifier handle="#e5b44e" className="size-[35px]" />
                    <span className="flex-1 text-center">Update</span>
                  </span>
                </button>
              </div>
            </fieldset>
          </div>
        </main>
      </div>
    </section>
  )
}

export default function App() {
  return (
    <div
      className={`relative flex min-h-screen items-start gap-[42px] overflow-hidden bg-[#1b2228] bg-[radial-gradient(ellipse_at_56%_100%,#1b1d34_0%,#1a202e_30%,transparent_62%)] pr-[76px] pl-[78px] ${UI}`}
    >
      <SharedDefs />
      <MagicsWindow />
      <FixWizard />
    </div>
  )
}
